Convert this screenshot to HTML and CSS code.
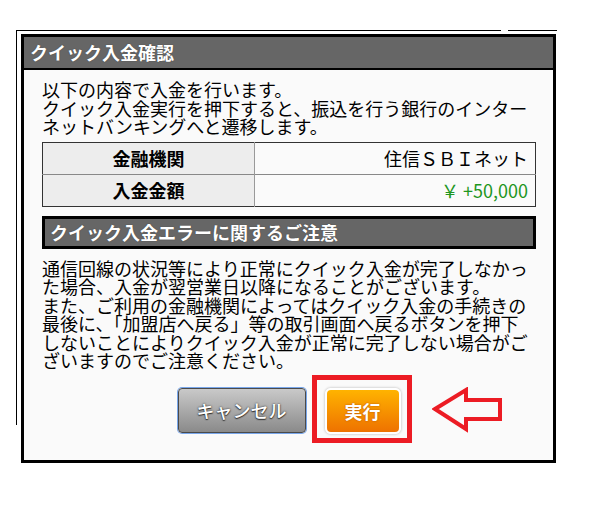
FILE: index.html
```html
<!DOCTYPE html>
<html lang="ja">
<head>
<meta charset="utf-8">
<title>クイック入金確認</title>
<link rel="stylesheet" href="styles.css">
</head>
<body>
<div class="page">
  <div class="frame">
    <div class="dialog">
      <div class="dialog-title">クイック入金確認</div>
      <div class="dialog-body">
        <p class="intro">以下の内容で入金を行います。<br>クイック入金実行を押下すると、振込を行う銀行のインターネットバンキングへと遷移します。</p>
        <table class="info">
          <tr>
            <th>金融機関</th>
            <td>住信ＳＢＩネット</td>
          </tr>
          <tr>
            <th>入金金額</th>
            <td class="amount">￥ +50,000</td>
          </tr>
        </table>
        <div class="section-title">クイック入金エラーに関するご注意</div>
        <p class="notice">通信回線の状況等により正常にクイック入金が完了しなかった場合、入金が翌営業日以降になることがございます。<br>また、ご利用の金融機関によってはクイック入金の手続きの最後に、「加盟店へ戻る」等の取引画面へ戻るボタンを押下しないことによりクイック入金が正常に完了しない場合がございますのでご注意ください。</p>
        <div class="actions">
          <button class="btn btn-cancel" type="button">キャンセル</button>
          <span class="exec-wrap">
            <button class="btn btn-exec" type="button">実行</button>
          </span>
          <svg class="arrow" width="72" height="48" viewBox="0 0 72 48" aria-hidden="true">
            <path d="M3 22 L34 3 L34 13 L68 13 L68 32 L34 32 L34 42 Z" fill="none" stroke="#ec1c24" stroke-width="4" stroke-linejoin="miter"/>
          </svg>
        </div>
      </div>
    </div>
  </div>
</div>
</body>
</html>
```
FILE: styles.css
```css
html, body {
  margin: 0;
  padding: 0;
  background: #ffffff;
}

body {
  font-family: "Noto Sans CJK JP", "Noto Sans", sans-serif;
  color: #000;
}

.page {
  padding: 30px 0 0 16px;
}

.frame {
  position: relative;
  width: 541px;
  border-top: 1px solid #000;
  padding: 3px 0 0 5px;
  box-sizing: border-box;
}

.frame::before {
  content: "";
  position: absolute;
  left: 0;
  top: -1px;
  width: 1px;
  height: 395px;
  background: #000;
}

.frame::after {
  content: "";
  position: absolute;
  left: 485px;
  top: -1px;
  width: 7px;
  height: 1px;
  background: #fff;
}

.dialog {
  width: 535px;
  height: 429px;
  box-sizing: border-box;
  border: 3px solid #000;
  background: #fafafa;
}

.dialog-title {
  height: 31px;
  line-height: 31px;
  background: #666666;
  border-bottom: 2px solid #000;
  color: #fff;
  font-weight: bold;
  font-size: 18px;
  padding-left: 6px;
  text-shadow: 0 0 1px #333;
}

.dialog-body {
  padding: 10px 17px 0 18px;
}

.intro,
.notice {
  margin: 0;
  font-size: 18px;
  line-height: 18.5px;
}

.info {
  margin-top: 6px;
  width: 494px;
  border-collapse: collapse;
  border: 1px solid #333;
  font-size: 18px;
}

.info th,
.info td {
  height: 31px;
  padding: 0 6px;
  border-top: 1px solid #888;
  line-height: 20px;
}

.info tr:first-child th,
.info tr:first-child td {
  border-top: none;
}

.info th {
  width: 199px;
  background: #ededed;
  font-weight: bold;
  text-align: center;
  border-right: 1px solid #999;
}

.info td {
  background: #fafafa;
  text-align: right;
  padding-right: 7px;
}

.info td.amount {
  color: #1e961e;
}

.section-title {
  margin-top: 9px;
  height: 27px;
  line-height: 27px;
  border: 3px solid #000;
  background: #666666;
  color: #fff;
  font-weight: bold;
  font-size: 18px;
  padding-left: 5px;
  text-shadow: 0 0 1px #333;
}

.notice {
  margin-top: 10px;
}

.actions {
  position: relative;
  display: flex;
  justify-content: center;
  align-items: flex-start;
  gap: 18px;
  margin-top: 17px;
  margin-left: -18px;
  margin-right: -17px;
}

.btn {
  font-family: "Noto Sans CJK JP", "Noto Sans", sans-serif;
  font-size: 18px;
  font-weight: bold;
  color: #fff;
  cursor: pointer;
  padding: 0;
  margin: 0;
}

.btn-cancel {
  width: 128px;
  height: 45px;
  margin: 1px;
  border: 1px solid #4a4a4a;
  border-radius: 4px;
  background: linear-gradient(#c9c9c9, #8a8a8a);
  box-shadow: 0 0 0 1px #78a6ea;
  font-weight: 500;
  text-shadow: 0 0 2px #222, 0 1px 1px #333;
}

.exec-wrap {
  position: relative;
  display: inline-block;
  margin-top: 1px;
}

.exec-wrap::before {
  content: "";
  position: absolute;
  left: -13px;
  top: -13px;
  right: -11px;
  bottom: -9px;
  border: 5px solid #ec1c24;
}

.btn-exec {
  position: relative;
  display: block;
  width: 76px;
  height: 46px;
  border: 2px solid #fff;
  border-radius: 6px;
  background: linear-gradient(#ffb300, #ee7200);
  box-shadow: 0 0 2px 1px #d8d8d8;
  text-shadow: 0 0 2px #b35000;
}

.arrow {
  position: absolute;
  left: 408px;
  top: 0;
}
```
